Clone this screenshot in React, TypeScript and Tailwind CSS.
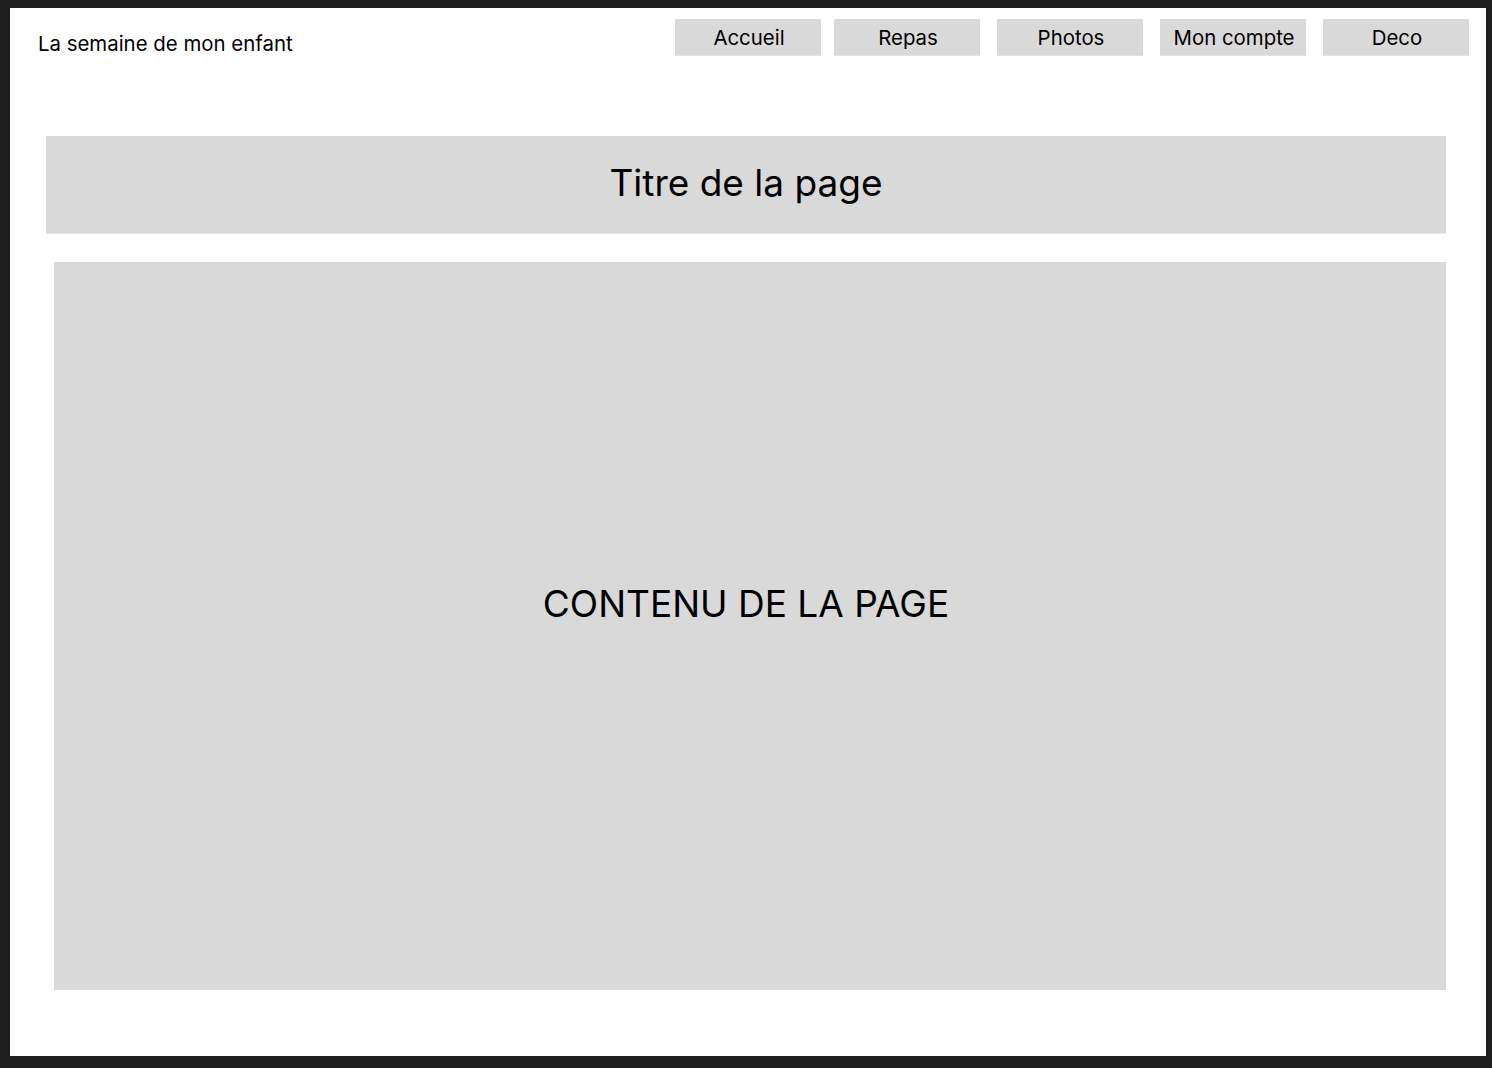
const navItems = ["Accueil", "Repas", "Photos", "Mon compte", "Deco"];

export default function App() {
  return (
    <div className="h-[1068px] w-[1492px] bg-[#1e1e1e] pl-[10px] pr-[6px] pt-[8px] pb-[12px] font-['Inter',sans-serif] text-black">
      <div className="flex h-full flex-col bg-white">
        <header className="flex items-start justify-between pl-[28px] pr-[17px] pt-[11px]">
          <div className="mt-[13px] text-[20.4px] leading-[24px]">La semaine de mon enfant</div>
          <nav className="flex">
            {navItems.map((item, i) => (
              <div
                key={item}
                className={
                  "flex h-[37px] w-[146px] items-center justify-center border-b border-[#e4e4e4] bg-[#d9d9d9] pt-[2px] pl-[2px] text-[20.4px] " +
                  (i === 0 ? "" : i === 1 ? "ml-[13px]" : "ml-[17px]")
                }
              >
                {item}
              </div>
            ))}
          </nav>
        </header>
        <div className="ml-[36px] mt-[80px] flex h-[98px] w-[1400px] items-center justify-center border-b border-[#e4e4e4] bg-[#d9d9d9] pb-[4px] text-[37px]">
          Titre de la page
        </div>
        <main className="ml-[44px] mt-[28px] flex h-[728px] w-[1392px] items-center justify-center bg-[#d9d9d9] pb-[44px] pr-[8px] text-[37px]">
          CONTENU DE LA PAGE
        </main>
      </div>
    </div>
  );
}
